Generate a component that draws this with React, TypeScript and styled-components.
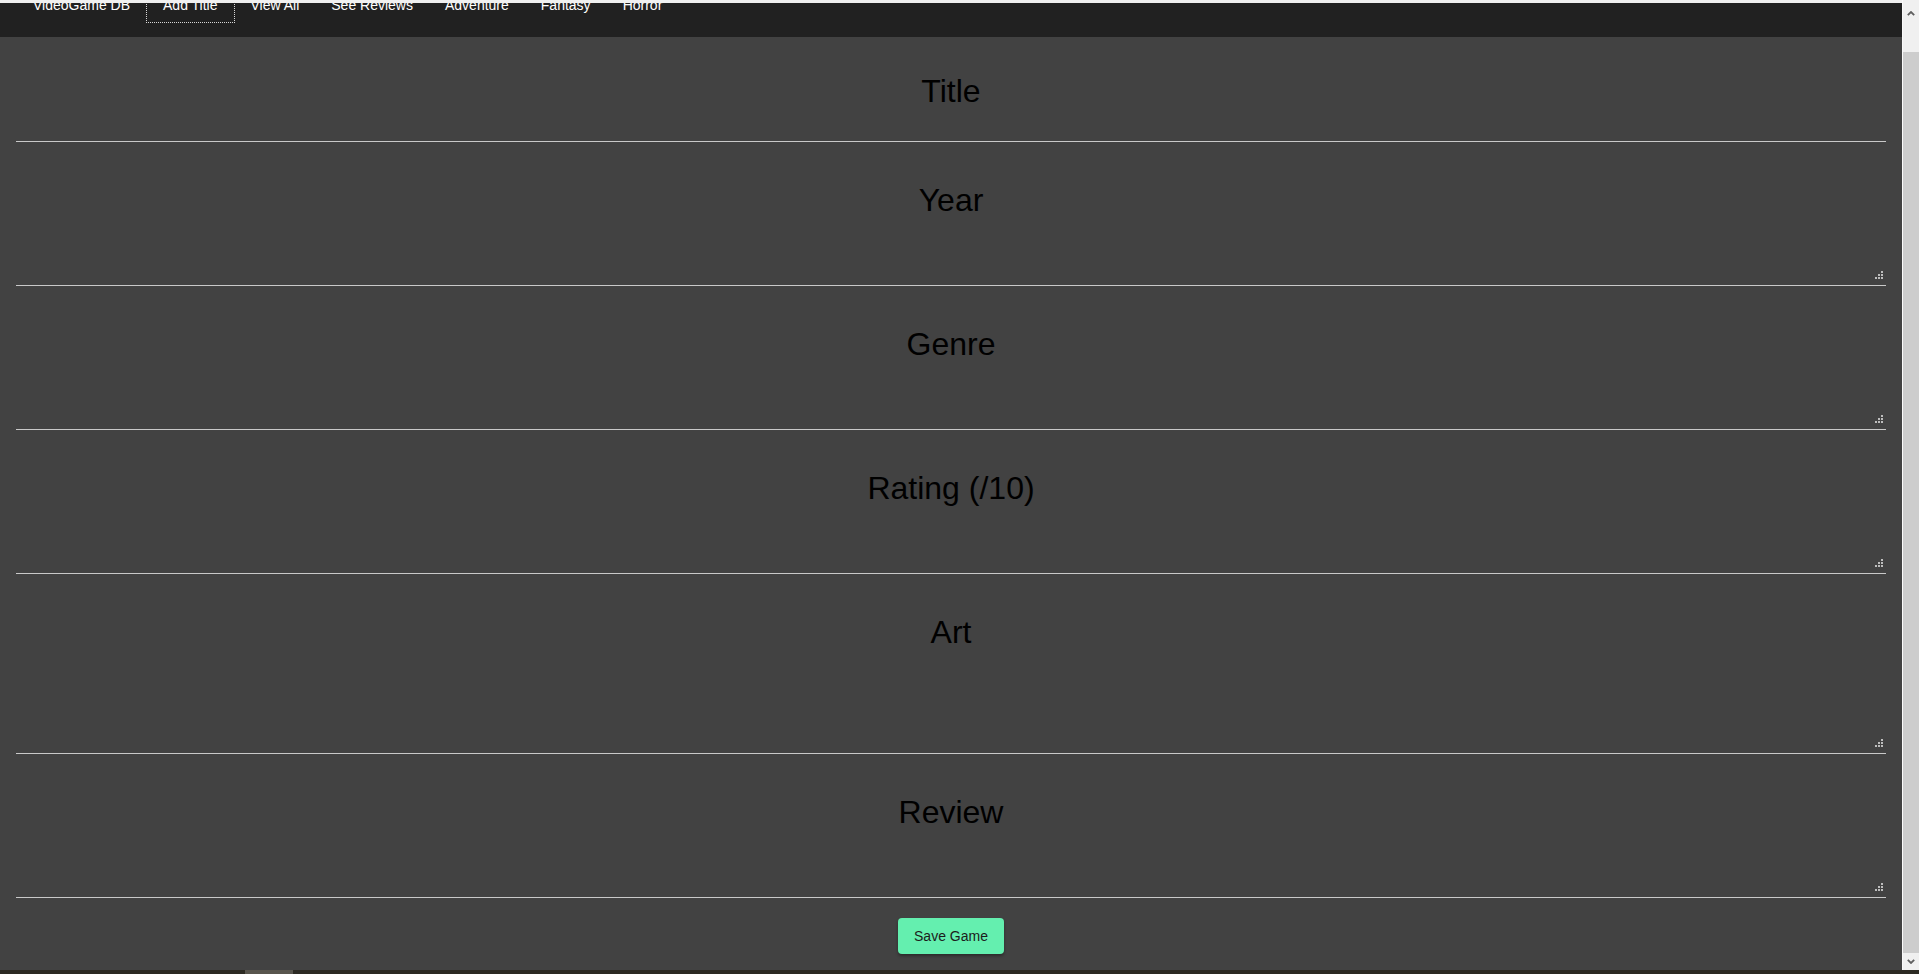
import React from 'react';
import styled, {createGlobalStyle} from 'styled-components';

const GlobalStyle = createGlobalStyle`
  html, body {
    margin: 0;
    padding: 0;
    height: 100%;
    overflow: hidden;
    font-family: "Liberation Sans", Arial, sans-serif;
  }
`

const Window = styled.div`
  height: 100vh;
  display: flex;
  flex-direction: column;
  background-color: #f0f0f0;
`

const Frame = styled.div`
  flex: 1;
  min-height: 0;
  display: flex;
`

const LeftColumn = styled.div`
  flex: 1;
  min-width: 0;
  display: flex;
  flex-direction: column;
`

const TopStrip = styled.div`
  height: 3px;
  background-color: #f0f0f0;
`

const Viewport = styled.div`
  flex: 1;
  min-height: 0;
  overflow: hidden;
  background-color: #424242;
`

// page is scrolled down a bit, so the navbar is partly out of view
const Page = styled.div`
  margin-top: -16px;
`

const Nav = styled.nav`
  height: 50px;
  background-color: #212121;
  padding-left: 17px;
  display: flex;
  align-items: flex-start;
`

const NavItem = styled.a<{active?: boolean}>`
  display: block;
  padding: ${({active}) => active ? '9px 16px' : '10px 16px'};
  border: ${({active}) => active ? '1px dotted #d8d8d8' : 'none'};
  color: #ffffff;
  font-size: 14px;
  line-height: 16px;
  text-decoration: none;
  white-space: nowrap;
  cursor: pointer;
`

const Form = styled.form`
  padding: 0 16px 16px;
  display: flex;
  flex-direction: column;
`

const Field = styled.div`
  display: flex;
  flex-direction: column;
  padding-top: 40px;

  &:first-child {
    padding-top: 36px;
  }
`

const FieldLabel = styled.label`
  font-size: 32px;
  line-height: 37px;
  color: #000000;
  text-align: center;
`

const TextInput = styled.input`
  box-sizing: border-box;
  width: 100%;
  height: 32px;
  background: transparent;
  border: none;
  border-bottom: 1px solid #c9c9c9;
  outline: none;
  color: #ffffff;
  font-family: inherit;
  font-size: 16px;
`

const AreaWrap = styled.div`
  position: relative;

  &::after {
    content: '';
    position: absolute;
    right: 3px;
    bottom: 7px;
    width: 2px;
    height: 2px;
    background-color: #bdbdbd;
    box-shadow: -3px 0 #bdbdbd, -6px 0 #bdbdbd, 0 -3px #bdbdbd, -3px -3px #bdbdbd, 0 -6px #bdbdbd;
    pointer-events: none;
  }
`

const TextArea = styled.textarea<{tall?: boolean}>`
  display: block;
  box-sizing: border-box;
  width: 100%;
  height: ${({tall}) => tall ? '103px' : '67px'};
  background: transparent;
  border: none;
  border-bottom: 1px solid #c9c9c9;
  outline: none;
  resize: none;
  color: #ffffff;
  font-family: inherit;
  font-size: 16px;
`

const SaveButton = styled.button`
  align-self: center;
  margin-top: 20px;
  height: 36px;
  padding: 0 16px;
  border: none;
  border-radius: 4px;
  background-color: #64efaf;
  box-shadow: 0 2px 3px rgba(0, 0, 0, 0.35);
  color: #1c1c1c;
  font-family: inherit;
  font-size: 14px;
  cursor: pointer;
`

const VScrollbar = styled.div`
  width: 16px;
  display: flex;
  flex-direction: column;
  background-color: #f0f0f0;
  border-left: 1px solid #fafafa;
`

const ArrowButton = styled.div<{h: number}>`
  height: ${({h}) => h}px;
  display: flex;
  align-items: center;
  justify-content: center;
  flex-shrink: 0;
`

const TrackGap = styled.div`
  height: 26px;
  flex-shrink: 0;
`

const VThumb = styled.div`
  flex: 1;
  background-color: #cdcdcd;
`

const BottomStrip = styled.div`
  height: 4px;
  background-color: #2c2a23;
  display: flex;
`

const HThumb = styled.div`
  margin-left: 245px;
  width: 48px;
  background-color: #58554d;
`

const Chevron = ({up}: {up?: boolean}) => (
  <svg width="8" height="5" viewBox="0 0 8 5">
    <polyline
      points={up ? '0.8,4.2 4,1 7.2,4.2' : '0.8,0.8 4,4 7.2,0.8'}
      fill="none"
      stroke="#5f5f5f"
      strokeWidth="1.8"
    />
  </svg>
)

const links = ['VideoGame DB', 'Add Title', 'View All', 'See Reviews', 'Adventure', 'Fantasy', 'Horror'];

const areas = [
  {name: 'year', label: 'Year'},
  {name: 'genre', label: 'Genre'},
  {name: 'rating', label: 'Rating (/10)'},
  {name: 'art', label: 'Art', tall: true},
  {name: 'review', label: 'Review'},
];

const App = () => {
  return (
    <>
      <GlobalStyle/>
      <Window>
        <Frame>
          <LeftColumn>
            <TopStrip/>
            <Viewport>
              <Page>
                <Nav>
                  {links.map(l => (
                    <NavItem key={l} active={l === 'Add Title'}>{l}</NavItem>
                  ))}
                </Nav>
                <Form onSubmit={e => e.preventDefault()}>
                  <Field>
                    <FieldLabel htmlFor="title">Title</FieldLabel>
                    <TextInput id="title" type="text"/>
                  </Field>
                  {areas.map(a => (
                    <Field key={a.name}>
                      <FieldLabel htmlFor={a.name}>{a.label}</FieldLabel>
                      <AreaWrap>
                        <TextArea id={a.name} tall={a.tall}/>
                      </AreaWrap>
                    </Field>
                  ))}
                  <SaveButton type="submit">Save Game</SaveButton>
                </Form>
              </Page>
            </Viewport>
          </LeftColumn>
          <VScrollbar>
            <ArrowButton h={26}><Chevron up/></ArrowButton>
            <TrackGap/>
            <VThumb/>
            <ArrowButton h={17}><Chevron/></ArrowButton>
          </VScrollbar>
        </Frame>
        <BottomStrip>
          <HThumb/>
        </BottomStrip>
      </Window>
    </>
  )
}

export default App;
